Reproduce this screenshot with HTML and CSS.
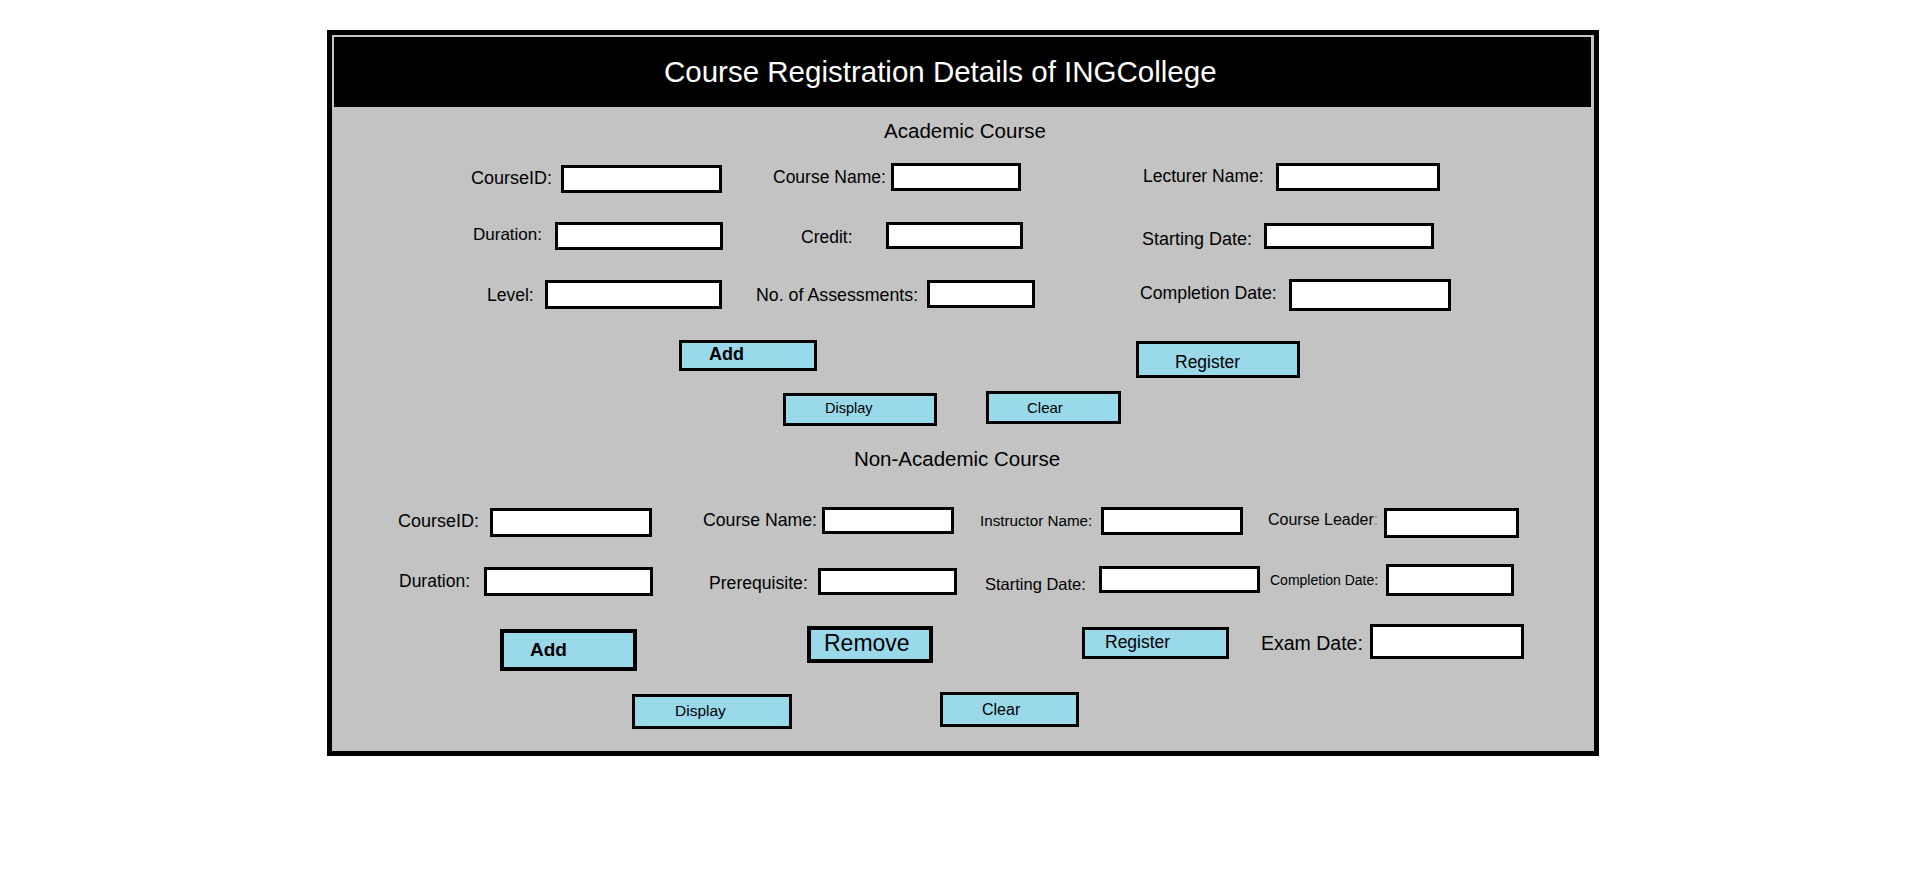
FILE: index.html
```html
<!DOCTYPE html>
<html lang="en">
<head>
<meta charset="utf-8">
<title>Course Registration Details of INGCollege</title>
<link rel="stylesheet" href="styles.css">
</head>
<body>
<div class="frame">
  <div class="header"><h1 class="title">Course Registration Details of INGCollege</h1></div>

  <section class="sec-a">
    <h2 class="heading heading-a">Academic Course</h2>
    <div class="row a1">
      <label class="lbl a1-l1">CourseID:</label><input class="inp a1-i1" type="text">
      <label class="lbl a1-l2">Course Name:</label><input class="inp a1-i2" type="text">
      <label class="lbl a1-l3">Lecturer Name:</label><input class="inp a1-i3" type="text">
    </div>
    <div class="row a2">
      <label class="lbl a2-l1">Duration:</label><input class="inp a2-i1" type="text">
      <label class="lbl a2-l2">Credit:</label><input class="inp a2-i2" type="text">
      <label class="lbl a2-l3">Starting Date:</label><input class="inp a2-i3" type="text">
    </div>
    <div class="row a3">
      <label class="lbl a3-l1">Level:</label><input class="inp a3-i1" type="text">
      <label class="lbl a3-l2">No. of Assessments:</label><input class="inp a3-i2" type="text">
      <label class="lbl a3-l3">Completion Date:</label><input class="inp a3-i3" type="text">
    </div>
    <div class="row a4">
      <button class="btn a4-add">Add</button>
      <button class="btn a4-reg">Register</button>
    </div>
    <div class="row a5">
      <button class="btn a5-disp">Display</button>
      <button class="btn a5-clr">Clear</button>
    </div>
  </section>

  <section class="sec-n">
    <h2 class="heading heading-n">Non-Academic Course</h2>
    <div class="row n1">
      <label class="lbl n1-l1">CourseID:</label><input class="inp n1-i1" type="text">
      <label class="lbl n1-l2">Course Name:</label><input class="inp n1-i2" type="text">
      <label class="lbl n1-l3">Instructor Name:</label><input class="inp n1-i3" type="text">
      <label class="lbl n1-l4">Course Leader<span class="faint">:</span></label><input class="inp n1-i4" type="text">
    </div>
    <div class="row n2">
      <label class="lbl n2-l1">Duration:</label><input class="inp n2-i1" type="text">
      <label class="lbl n2-l2">Prerequisite:</label><input class="inp n2-i2" type="text">
      <label class="lbl n2-l3">Starting Date:</label><input class="inp n2-i3" type="text">
      <label class="lbl n2-l4">Completion Date:</label><input class="inp n2-i4" type="text">
    </div>
    <div class="row n3">
      <button class="btn n3-add">Add</button>
      <button class="btn n3-rem">Remove</button>
      <button class="btn n3-reg">Register</button>
      <label class="lbl n3-l1">Exam Date:</label><input class="inp n3-i1" type="text">
    </div>
    <div class="row n4">
      <button class="btn n4-disp">Display</button>
      <button class="btn n4-clr">Clear</button>
    </div>
  </section>
</div>
</body>
</html>
```

FILE: styles.css
```css
html, body {
  margin: 0;
  padding: 0;
  background: #ffffff;
}

body {
  font-family: "Liberation Sans", Arial, sans-serif;
  color: #000;
}

.frame {
  box-sizing: border-box;
  width: 1272px;
  height: 726px;
  margin: 30px 0 0 327px;
  border: 5px solid #000;
  background: #c3c3c3;
}

.header {
  box-sizing: border-box;
  height: 70px;
  margin: 2px 3px 0 2px;
  background: #000;
  display: flex;
  align-items: center;
  padding-left: 330px;
}

.title {
  margin: 0;
  font-size: 29.5px;
  font-weight: normal;
  color: #fff;
  line-height: 1;
  white-space: nowrap;
}

.heading {
  margin: 0;
  height: 24px;
  line-height: 24px;
  font-size: 20.5px;
  font-weight: normal;
  text-align: center;
  white-space: nowrap;
}

.heading-a {
  margin-top: 12px;
  margin-bottom: 20px;
  padding-left: 4px;
}

.heading-n {
  margin-top: 1px;
  margin-bottom: 36px;
  padding-right: 12px;
}

.row {
  display: flex;
  align-items: flex-start;
}

.lbl {
  display: block;
  flex: none;
  font-size: 18px;
  line-height: 1;
  white-space: nowrap;
}

.faint {
  color: #8a8a8a;
}

.inp {
  display: block;
  flex: none;
  box-sizing: border-box;
  margin: 0;
  padding: 0;
  border: 3px solid #000;
  border-radius: 0;
  background: #fff;
  outline: none;
}

.btn {
  display: block;
  flex: none;
  box-sizing: border-box;
  margin: 0;
  padding: 0;
  border: 3px solid #000;
  border-radius: 0;
  background: #99d9ea;
  color: #000;
  font-family: "Liberation Sans", Arial, sans-serif;
  line-height: 1;
  text-align: left;
}

/* ---------- Academic rows ---------- */
.a1 { height: 59px; }
.a2 { height: 57px; }
.a3 { height: 61px; }
.a4 { height: 51px; }
.a5 { height: 55px; }

.a1-l1 { margin: 6px 0 0 139px; width: 81px; }
.a1-i1 { margin: 2px 0 0 9px; width: 161px; height: 28px; }
.a1-l2 { margin: 6px 0 0 51px; width: 112px; font-size: 17.5px; }
.a1-i2 { margin: 0 0 0 6px; width: 130px; height: 28px; }
.a1-l3 { margin: 5px 0 0 122px; width: 122px; font-size: 17.5px; }
.a1-i3 { margin: 0 0 0 11px; width: 164px; height: 28px; }

.a2-l1 { margin: 4px 0 0 141px; width: 69px; font-size: 17px; }
.a2-i1 { margin: 0 0 0 13px; width: 168px; height: 28px; }
.a2-l2 { margin: 7px 0 0 78px; width: 52px; font-size: 17.5px; }
.a2-i2 { margin: 0 0 0 33px; width: 137px; height: 27px; }
.a2-l3 { margin: 8px 0 0 119px; width: 110px; }
.a2-i3 { margin: 1px 0 0 12px; width: 170px; height: 26px; }

.a3-l1 { margin: 8px 0 0 155px; width: 47px; font-size: 17.5px; }
.a3-i1 { margin: 1px 0 0 11px; width: 177px; height: 29px; }
.a3-l2 { margin: 8px 0 0 34px; width: 163px; font-size: 17.8px; }
.a3-i2 { margin: 1px 0 0 8px; width: 108px; height: 28px; }
.a3-l3 { margin: 6px 0 0 105px; width: 137px; font-size: 17.7px; }
.a3-i3 { margin: 0 0 0 12px; width: 162px; height: 32px; }

.a4-add {
  margin: 0 0 0 347px; width: 138px; height: 31px;
  padding: 0 0 3px 27px; font-size: 18px; font-weight: bold;
}
.a4-reg {
  margin: 1px 0 0 319px; width: 164px; height: 37px;
  padding: 6px 0 0 36px; font-size: 17.5px;
}

.a5-disp {
  margin: 2px 0 0 451px; width: 154px; height: 33px;
  padding: 0 0 2px 39px; font-size: 14.5px;
}
.a5-clr {
  margin: 0 0 0 49px; width: 135px; height: 33px;
  padding: 0 0 0 38px; font-size: 15px;
}

/* ---------- Non-academic rows ---------- */
.n1 { height: 57px; }
.n2 { height: 60px; }
.n3 { height: 68px; }
.n4 { height: 59px; }

.n1-l1 { margin: 5px 0 0 66px; width: 81px; }
.n1-i1 { margin: 1px 0 0 11px; width: 162px; height: 29px; }
.n1-l2 { margin: 5px 0 0 51px; width: 114px; font-size: 17.7px; }
.n1-i2 { margin: 0 0 0 5px; width: 132px; height: 27px; }
.n1-l3 { margin: 6px 0 0 26px; width: 112px; font-size: 15.2px; }
.n1-i3 { margin: 0 0 0 9px; width: 142px; height: 28px; }
.n1-l4 { margin: 5px 0 0 25px; width: 110px; font-size: 16px; }
.n1-i4 { margin: 1px 0 0 6px; width: 135px; height: 30px; }

.n2-l1 { margin: 9px 0 0 67px; width: 71px; font-size: 17.5px; }
.n2-i1 { margin: 3px 0 0 14px; width: 169px; height: 29px; }
.n2-l2 { margin: 11px 0 0 56px; width: 99px; font-size: 17.6px; }
.n2-i2 { margin: 4px 0 0 10px; width: 139px; height: 27px; }
.n2-l3 { margin: 12px 0 0 28px; width: 101px; font-size: 16.5px; }
.n2-i3 { margin: 2px 0 0 13px; width: 161px; height: 27px; }
.n2-l4 { margin: 9px 0 0 10px; width: 108px; font-size: 14px; }
.n2-i4 { margin: 0 0 0 8px; width: 128px; height: 32px; }

.n3-add {
  margin: 5px 0 0 168px; width: 137px; height: 42px;
  border-width: 4px; padding: 0 0 2px 26px;
  font-size: 19px; font-weight: bold;
}
.n3-rem {
  margin: 2px 0 0 170px; width: 126px; height: 37px;
  border-width: 4px; padding: 0 0 2px 13px; font-size: 23px;
}
.n3-reg {
  margin: 3px 0 0 149px; width: 147px; height: 32px;
  padding: 0 0 0 20px; font-size: 17.5px;
}
.n3-l1 { margin: 10px 0 0 32px; width: 101px; font-size: 19.5px; }
.n3-i1 { margin: 0 0 0 8px; width: 154px; height: 35px; }

.n4-disp {
  margin: 2px 0 0 300px; width: 160px; height: 35px;
  padding: 0 0 1px 40px; font-size: 15.5px;
}
.n4-clr {
  margin: 0 0 0 148px; width: 139px; height: 35px;
  padding: 0 0 0 39px; font-size: 16px;
}
```
